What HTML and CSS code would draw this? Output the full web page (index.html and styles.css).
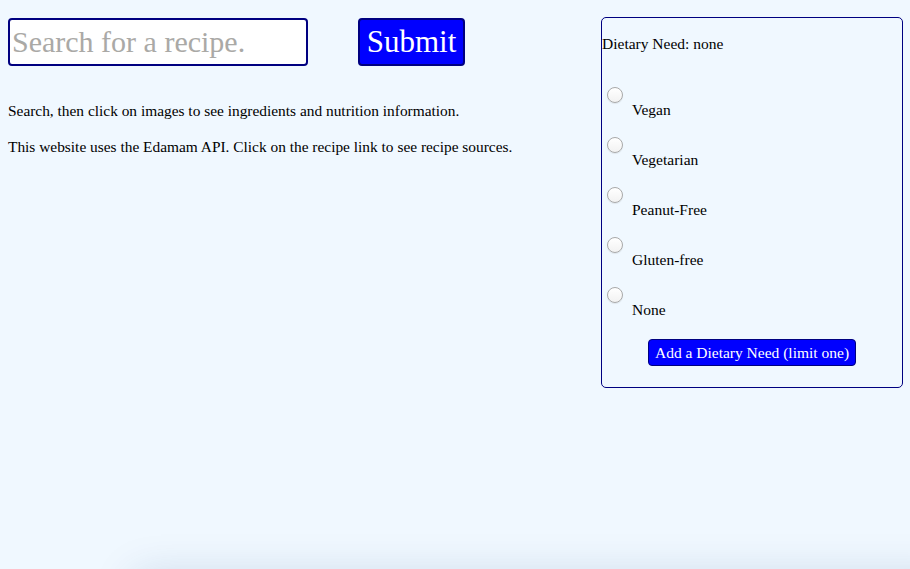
FILE: index.html
```html
<!DOCTYPE html>
<html lang="en">
<head>
<meta charset="utf-8">
<title>Recipe Search</title>
<link rel="stylesheet" href="styles.css">
</head>
<body>
<div class="page">
  <main class="main">
    <form class="search">
      <input class="search-input" type="text" placeholder="Search for a recipe.">
      <button class="submit" type="button">Submit</button>
    </form>
    <p class="info">Search, then click on images to see ingredients and nutrition information.</p>
    <p class="info">This website uses the Edamam API. Click on the recipe link to see recipe sources.</p>
  </main>
  <aside class="panel">
    <div class="need">Dietary Need: none</div>
    <div class="options">
      <div class="option"><input class="radio" type="radio" name="diet" id="d1"><label for="d1">Vegan</label></div>
      <div class="option"><input class="radio" type="radio" name="diet" id="d2"><label for="d2">Vegetarian</label></div>
      <div class="option"><input class="radio" type="radio" name="diet" id="d3"><label for="d3">Peanut-Free</label></div>
      <div class="option"><input class="radio" type="radio" name="diet" id="d4"><label for="d4">Gluten-free</label></div>
      <div class="option"><input class="radio" type="radio" name="diet" id="d5"><label for="d5">None</label></div>
    </div>
    <div class="add-row"><button class="add" type="button">Add a Dietary Need (limit one)</button></div>
  </aside>
</div>
<div class="results"></div>
</body>
</html>
```
FILE: styles.css
```css
html, body {
  margin: 0;
  padding: 0;
  background: #f0f8ff;
  height: 100%;
  overflow: hidden;
}
body {
  font-family: "Liberation Serif", "DejaVu Serif", serif;
  color: #000;
}
.page {
  display: flex;
  justify-content: space-between;
  align-items: flex-start;
  padding: 17px 7px 0 8px;
}
.main {
  display: flex;
  flex-direction: column;
}
.search {
  display: flex;
  gap: 50px;
  margin-top: 1px;
}
.search-input {
  box-sizing: border-box;
  width: 300px;
  height: 48px;
  border: 2px solid #000080;
  border-radius: 4px;
  background: #fff;
  padding: 0 0 0 2px;
  font-family: inherit;
  font-size: 30px;
  color: #000;
  outline: none;
}
.search-input::placeholder {
  color: #aaa9a6;
}
.submit {
  box-sizing: border-box;
  width: 107px;
  height: 48px;
  background: #0000ff;
  color: #fff;
  border: 2px solid #000080;
  border-radius: 4px;
  font-family: inherit;
  font-size: 31px;
  padding: 0;
}
.info {
  margin: 0;
  font-size: 15.4px;
  line-height: 20px;
}
.info:first-of-type {
  margin-top: 35px;
}
.info + .info {
  margin-top: 16px;
}
.panel {
  box-sizing: border-box;
  width: 302px;
  height: 371px;
  border: 1px solid #000080;
  border-radius: 5px;
  display: flex;
  flex-direction: column;
}
.need {
  font-size: 15.5px;
  line-height: 20px;
  margin-top: 16px;
}
.options {
  margin-top: 33px;
  display: flex;
  flex-direction: column;
}
.option {
  height: 50px;
}
.radio {
  appearance: none;
  -webkit-appearance: none;
  display: block;
  width: 16px;
  height: 16px;
  margin: 0 0 0 5px;
  border: 1px solid #a9a9a9;
  border-radius: 50%;
  background: linear-gradient(#ffffff, #f2f2f2);
  box-shadow: 0 1px 1px rgba(0, 0, 0, 0.08);
  box-sizing: border-box;
}
.option label {
  display: block;
  padding-left: 30px;
  font-size: 15.5px;
  line-height: 20px;
  margin-top: -3px;
}
.add-row {
  display: flex;
  justify-content: center;
  margin-top: 2px;
}
.add {
  box-sizing: border-box;
  height: 27px;
  padding: 0 6px;
  background: #0000ff;
  color: #fff;
  border: 1px solid #000080;
  border-radius: 4px;
  font-family: inherit;
  font-size: 15.5px;
}
.results {
  position: fixed;
  left: 135px;
  right: -40px;
  top: 580px;
  height: 200px;
  box-shadow: 0 -4px 40px rgba(20, 60, 120, 0.18);
}
```
